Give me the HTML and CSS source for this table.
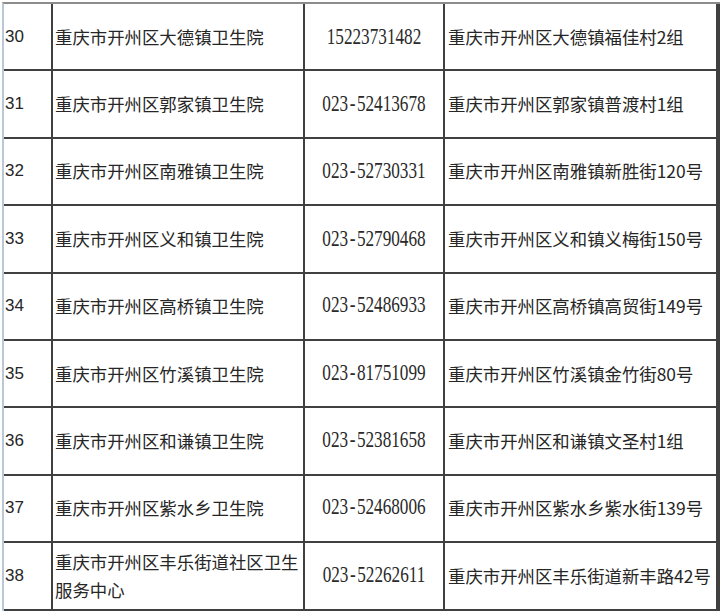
FILE: index.html
```html
<!DOCTYPE html>
<html lang="zh-CN">
<head>
<meta charset="utf-8">
<title>开州区卫生院</title>
<link rel="stylesheet" href="styles.css">
</head>
<body>
<div class="sheet">
  <div class="c num">30</div><div class="c name">重庆市开州区大德镇卫生院</div><div class="c tel"><span class="ph">15223731482</span></div><div class="c addr">重庆市开州区大德镇福佳村2组</div>
  <div class="c num">31</div><div class="c name">重庆市开州区郭家镇卫生院</div><div class="c tel"><span class="ph">023<span class="hy">-</span>52413678</span></div><div class="c addr">重庆市开州区郭家镇普渡村1组</div>
  <div class="c num">32</div><div class="c name">重庆市开州区南雅镇卫生院</div><div class="c tel"><span class="ph">023<span class="hy">-</span>52730331</span></div><div class="c addr">重庆市开州区南雅镇新胜街120号</div>
  <div class="c num">33</div><div class="c name">重庆市开州区义和镇卫生院</div><div class="c tel"><span class="ph">023<span class="hy">-</span>52790468</span></div><div class="c addr">重庆市开州区义和镇义梅街150号</div>
  <div class="c num">34</div><div class="c name">重庆市开州区高桥镇卫生院</div><div class="c tel"><span class="ph">023<span class="hy">-</span>52486933</span></div><div class="c addr">重庆市开州区高桥镇高贸街149号</div>
  <div class="c num">35</div><div class="c name">重庆市开州区竹溪镇卫生院</div><div class="c tel"><span class="ph">023<span class="hy">-</span>81751099</span></div><div class="c addr">重庆市开州区竹溪镇金竹街80号</div>
  <div class="c num">36</div><div class="c name">重庆市开州区和谦镇卫生院</div><div class="c tel"><span class="ph">023<span class="hy">-</span>52381658</span></div><div class="c addr">重庆市开州区和谦镇文圣村1组</div>
  <div class="c num">37</div><div class="c name">重庆市开州区紫水乡卫生院</div><div class="c tel"><span class="ph">023<span class="hy">-</span>52468006</span></div><div class="c addr">重庆市开州区紫水乡紫水街139号</div>
  <div class="c num">38</div><div class="c name">重庆市开州区丰乐街道社区卫生服务中心</div><div class="c tel"><span class="ph">023<span class="hy">-</span>52262611</span></div><div class="c addr">重庆市开州区丰乐街道新丰路42号</div>
</div>
</body>
</html>
```

FILE: styles.css
```css
html, body {
  margin: 0;
  padding: 0;
  background: #ffffff;
}
body {
  padding: 2px 0 0 2px;
}
.sheet {
  width: 714px;
  display: grid;
  grid-template-columns: 47px 250px 138px 271px;
  grid-template-rows: repeat(9, 65.4px);
  gap: 2px;
  background: #404040;
  border-left: 2px solid #b9c7d6;
  border-top: 2px solid #8c8c8c;
  padding: 0 2px 2px 0;
}
.c {
  background: #ffffff;
  display: flex;
  align-items: center;
  color: #262626;
  font-family: "Noto Sans CJK SC", "Noto Sans", sans-serif;
  font-size: 17.4px;
  line-height: 28px;
  overflow: hidden;
}
.num {
  font-family: "Liberation Sans", Arial, sans-serif;
  font-size: 17px;
  padding-left: 1px;
}
.name {
  padding-left: 2px;
}
.tel {
  justify-content: center;
}
.ph {
  display: inline-block;
  font-family: "Liberation Serif", "Times New Roman", serif;
  font-size: 17.2px;
  transform: scaleY(1.3);
  color: #2a2a2a;
}
.hy {
  padding: 0 1.5px;
}
.addr {
  padding-left: 3px;
  white-space: nowrap;
}
```
